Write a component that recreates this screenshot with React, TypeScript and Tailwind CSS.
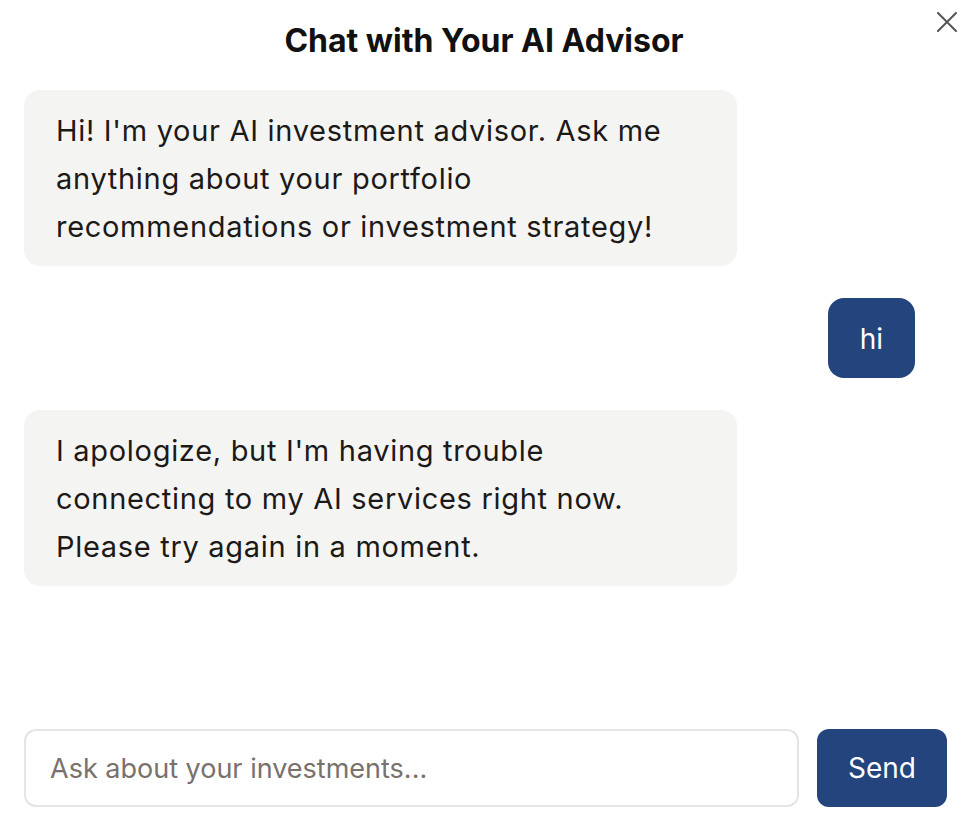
const messages = [
  {
    role: 'assistant',
    text: "Hi! I'm your AI investment advisor. Ask me anything about your portfolio recommendations or investment strategy!",
  },
  { role: 'user', text: 'hi' },
  {
    role: 'assistant',
    text: "I apologize, but I'm having trouble connecting to my AI services right now. Please try again in a moment.",
  },
]

const CloseIcon = () => (
  <svg width="20" height="20" viewBox="0 0 20 20" fill="none">
    <path d="M1 1L19 19M19 1L1 19" stroke="#555" strokeWidth="2" strokeLinecap="round" />
  </svg>
)

export default function App() {
  return (
    <div
      className="relative flex flex-col w-full h-[840px] bg-white text-[#1c1917]"
      style={{ fontFamily: 'Inter, "Noto Sans", sans-serif' }}
    >
      <button className="absolute top-[12px] right-[11px] p-0">
        <CloseIcon />
      </button>

      <h1 className="pt-[22px] text-center text-[32px] leading-[38px] font-bold text-[#111]">
        Chat with Your AI Advisor
      </h1>

      <div className="flex-1 flex flex-col gap-8 pt-[30px] pl-6 pr-[53px]">
        {messages.map((m, i) =>
          m.role === 'user' ? (
            <div key={i} className="flex justify-end">
              <div className="max-w-[80%] px-8 pt-[17px] pb-[15px] rounded-2xl bg-[#23447d] text-white text-[28px] leading-[48px]">
                {m.text}
              </div>
            </div>
          ) : (
            <div key={i} className="flex justify-start">
              <div className="max-w-[80%] px-8 pt-[17px] pb-[15px] rounded-2xl bg-[#f4f4f3] text-[29px] tracking-[0.024em] leading-[48px]">
                {m.text}
              </div>
            </div>
          )
        )}
      </div>

      <div className="flex gap-[18px] pl-6 pr-[21px] pb-[33px]">
        <input
          className="flex-1 h-[78px] px-[24px] border-2 border-[#e5e5e5] rounded-xl text-[27px] outline-none placeholder:text-[#78716c]"
          placeholder="Ask about your investments..."
        />
        <button className="w-[130px] h-[78px] rounded-xl bg-[#23447d] text-white text-[28px]">
          Send
        </button>
      </div>
    </div>
  )
}
